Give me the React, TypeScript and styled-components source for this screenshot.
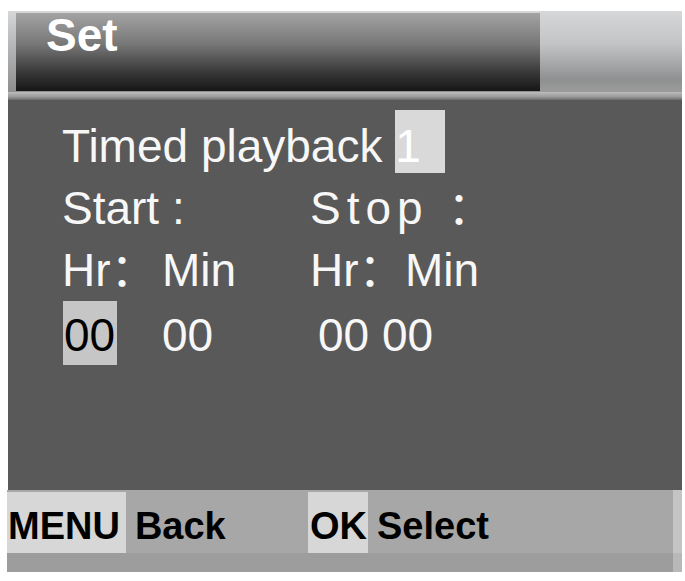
import styled, { createGlobalStyle } from 'styled-components'

const GlobalStyle = createGlobalStyle`
  html, body {
    margin: 0;
    padding: 0;
    background: #ffffff;
  }
  body {
    font-family: "Liberation Sans", Arial, "Noto Sans CJK SC", sans-serif;
  }
`

const Screen = styled.div`
  width: 674px;
  margin: 11px 0 0 8px;
  display: flex;
  flex-direction: column;
`

const Header = styled.div`
  display: flex;
  height: 81px;
  background: linear-gradient(#d6d7d8, #a9aaab 60%, #8e8e8e);
`

const TitleBar = styled.div`
  width: 524px;
  margin: 2px 0 1px 8px;
  padding-left: 30px;
  box-sizing: border-box;
  background: linear-gradient(#a3a3a3, #777777 40%, #3a3a3a 75%, #161616);
  color: #ffffff;
  font-weight: bold;
  font-size: 46px;
  line-height: 44px;
`

const SidePanel = styled.div`
  flex: 1;
  background: linear-gradient(#d5d7d9, #c2c4c6 40%, #8f9091 85%, #9c9c9c);
`

const Divider = styled.div`
  height: 8px;
  background: linear-gradient(#bdbdbd, #9a9a9a 60%, #6a6a6a);
`

const Main = styled.div`
  height: 380px;
  padding: 10px 0 0 54px;
  background: #595959;
  color: #f7f7f7;
  font-size: 46px;
  line-height: 62px;
`

const Grid = styled.div`
  display: grid;
  grid-template-columns: 100px 148px 95px auto;
  align-items: baseline;
  white-space: nowrap;
`

const Cell = styled.div<{ $span?: number; $col?: number; $shift?: number; $spacing?: number }>`
  grid-column: ${p => (p.$col ? `${p.$col} / span ${p.$span ?? 1}` : `span ${p.$span ?? 1}`)};
  padding-left: ${p => p.$shift ?? 0}px;
  letter-spacing: ${p => p.$spacing ?? 0}px;
`

const Mark = styled.span<{ $dark?: boolean }>`
  display: inline-block;
  vertical-align: baseline;
  line-height: 53px;
  background: ${p => (p.$dark ? '#c6c6c6' : '#d9d9d9')};
  color: ${p => (p.$dark ? '#000000' : '#ffffff')};
`

const PlaybackMark = styled(Mark)`
  padding: 10px 24px 0 0;
`

const FieldMark = styled(Mark)`
  padding: 8px 2px 3px 1px;
  margin-left: 1px;
`

const Footer = styled.div`
  height: 63px;
  margin-left: -1px;
  display: flex;
  align-items: flex-start;
  padding-top: 2px;
  box-sizing: border-box;
  background: #a7a7a7;
  border-right: 9px solid #c4c4c4;
  font-weight: bold;
  font-size: 38px;
  color: #000000;
`

const FooterBase = styled.div`
  height: 19px;
  margin-left: -1px;
  background: #9d9d9d;
  border-right: 9px solid #b8b8b8;
`

const Hint = styled.div<{ $width: number }>`
  width: ${p => p.$width}px;
  display: flex;
  align-items: baseline;
  gap: 9px;
`

const Key = styled.span`
  display: inline-block;
  padding: 8px 6px 0 1px;
  line-height: 53px;
  background: #d7d7d7;
`

const OkKey = styled(Key)`
  padding: 8px 1px 0 2px;
`

export default function App() {
  return (
    <>
      <GlobalStyle />
      <Screen>
        <Header>
          <TitleBar>Set</TitleBar>
          <SidePanel />
        </Header>
        <Divider />
        <Main>
          <Grid>
            <Cell $span={4}>
              Timed playback <PlaybackMark>1</PlaybackMark>
            </Cell>
            <Cell $col={1} $span={2}>Start :</Cell>
            <Cell $col={3} $span={2} $spacing={6}>Stop ：</Cell>
            <Cell>Hr：</Cell>
            <Cell>Min</Cell>
            <Cell>Hr：</Cell>
            <Cell>Min</Cell>
            <Cell>
              <FieldMark $dark>00</FieldMark>
            </Cell>
            <Cell>00</Cell>
            <Cell $span={2} $shift={8}>00 00</Cell>
          </Grid>
        </Main>
        <Footer>
          <Hint $width={301}>
            <Key>MENU</Key>
            <span>Back</span>
          </Hint>
          <Hint $width={300}>
            <OkKey>OK</OkKey>
            <span>Select</span>
          </Hint>
        </Footer>
        <FooterBase />
      </Screen>
    </>
  )
}
